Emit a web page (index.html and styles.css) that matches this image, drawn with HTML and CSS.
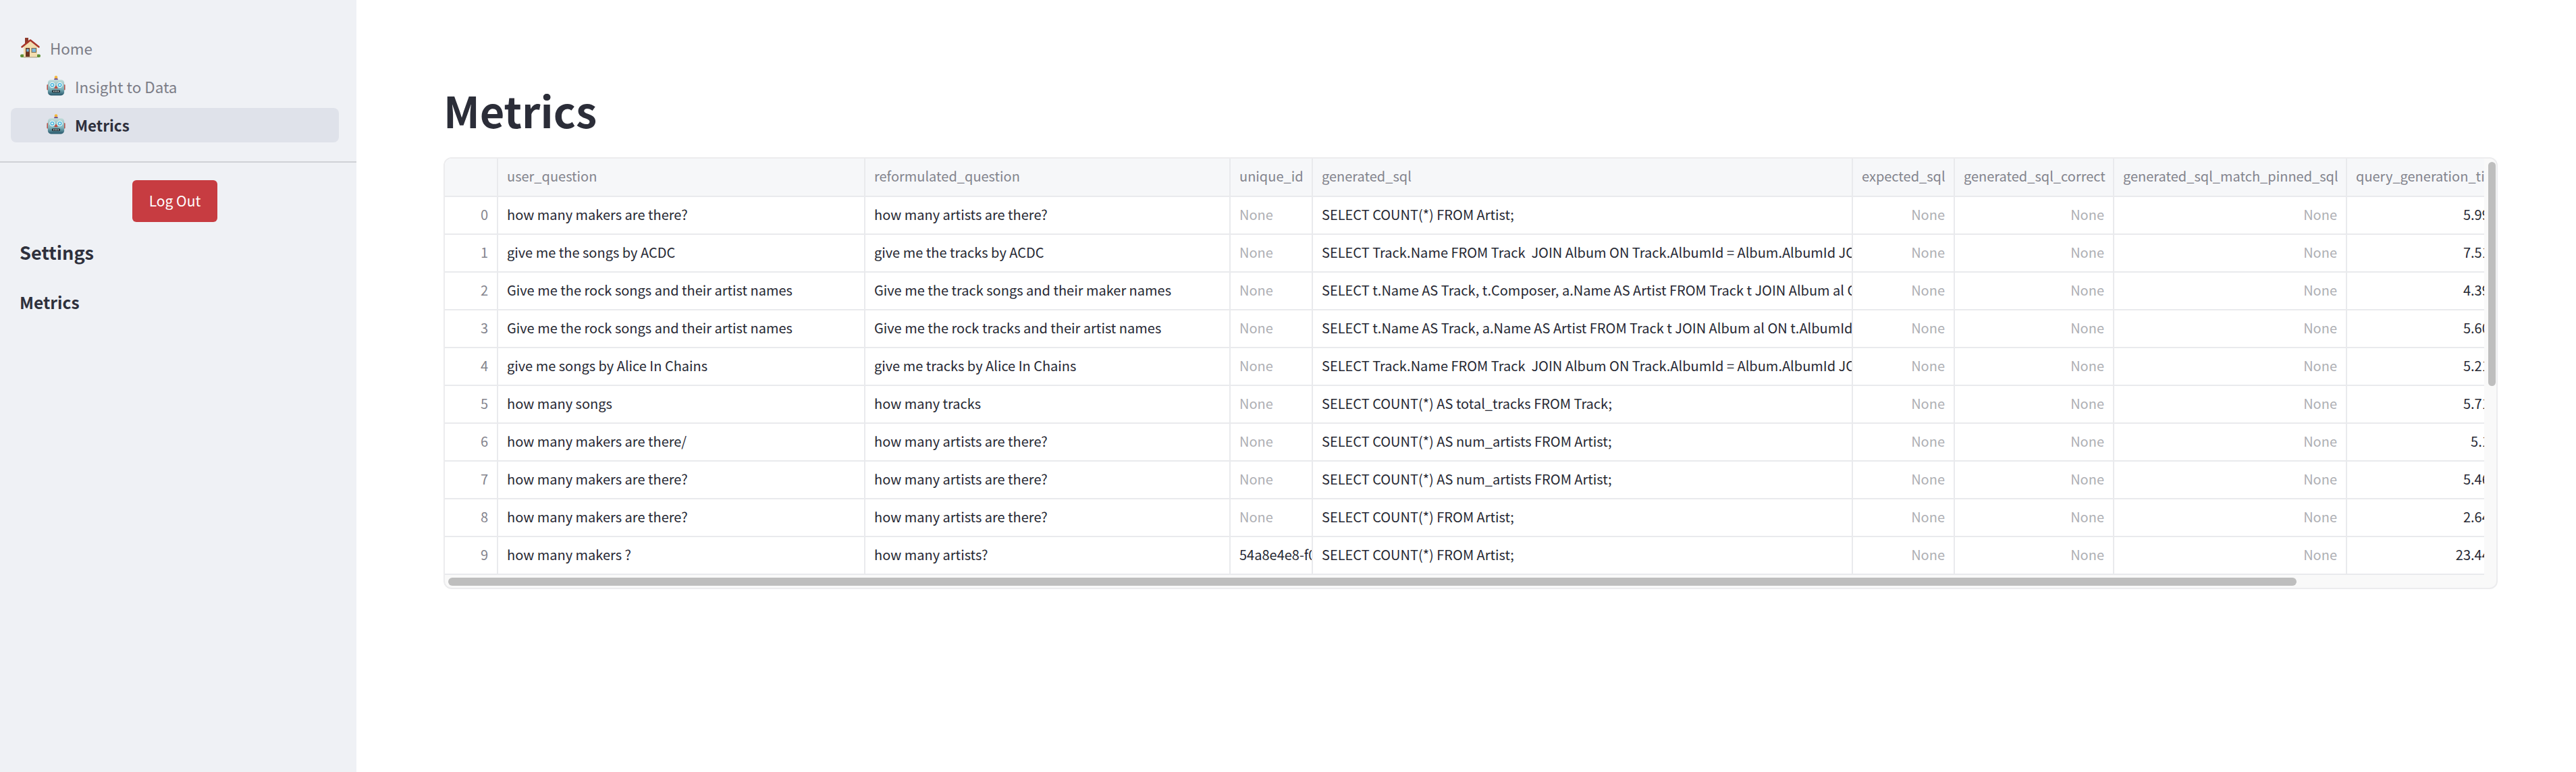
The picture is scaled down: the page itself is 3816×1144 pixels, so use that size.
FILE: index.html
```html
<!DOCTYPE html>
<html lang="en">
<head>
<meta charset="utf-8">
<title>Metrics</title>
<link rel="stylesheet" href="styles.css">
</head>
<body>
<div class="app">
  <aside class="sidebar">
    <nav class="nav">
      <a class="nav-item nav-home">
        <svg class="emoji-house" viewBox="0 0 30 30"><rect x="0" y="24.500" width="6" height="4.500" rx="2" fill="#5f8f37"/><rect x="24" y="24.500" width="6" height="4.500" rx="2" fill="#5f8f37"/><rect x="7" y="0" width="5" height="8" fill="#8e3a2c"/><path d="M5 13 15 5l10 8v15H5z" fill="#f2dcae"/><path d="M2.500 13.500 15 3.500l12.500 10" fill="none" stroke="#a8362a" stroke-width="2.600" stroke-linecap="round" stroke-linejoin="round"/><rect x="8" y="15" width="6" height="13" fill="#6b3320"/><rect x="9.300" y="16.500" width="3.400" height="4" fill="#6fb2d8"/><rect x="16.500" y="15" width="7.500" height="7" fill="#7d6a50"/><rect x="17.500" y="16" width="5.500" height="5" fill="#79b6dc"/><rect x="5" y="28" width="20" height="1.500" fill="#b9ad94"/></svg>
        <span>Home</span>
      </a>
      <a class="nav-item nav-sub">
        <svg class="emoji-robot" viewBox="0 0 30 32"><defs><linearGradient id="rb1" x1="0" y1="0" x2="0" y2="1"><stop offset="0" stop-color="#c2dcda"/><stop offset=".6" stop-color="#7fb3bb"/><stop offset="1" stop-color="#26566a"/></linearGradient></defs><circle cx="15" cy="2.800" r="2.500" fill="#f2b63c"/><rect x="12" y="4.500" width="6" height="2.500" rx="1" fill="#6a4a8c"/><rect x="0.500" y="14" width="3" height="9" rx="1" fill="#b8453a"/><rect x="26.500" y="14" width="3" height="9" rx="1" fill="#b8453a"/><rect x="2" y="6.500" width="26" height="25" rx="5" fill="url(#rb1)"/><circle cx="9" cy="15" r="4.500" fill="#e8f6f8"/><circle cx="21" cy="15" r="4.500" fill="#e8f6f8"/><circle cx="9" cy="15" r="3.200" fill="#46b4dc"/><circle cx="21" cy="15" r="3.200" fill="#46b4dc"/><circle cx="9" cy="15" r="1.600" fill="#e8f6f8"/><circle cx="21" cy="15" r="1.600" fill="#e8f6f8"/><path d="M15 15.500l3 5h-6z" fill="#c4463c"/><rect x="8.500" y="23" width="13" height="4" rx="1.500" fill="#1f2c33"/><path d="M10.500 24h1.500v2h-1.500zM13 24h1.500v2H13zM15.500 24H17v2h-1.500zM18 24h1.500v2H18z" fill="#c9d3d3"/></svg>
        <span>Insight to Data</span>
      </a>
      <a class="nav-item nav-sub nav-active">
        <svg class="emoji-robot" viewBox="0 0 30 32"><defs><linearGradient id="rb2" x1="0" y1="0" x2="0" y2="1"><stop offset="0" stop-color="#c2dcda"/><stop offset=".6" stop-color="#7fb3bb"/><stop offset="1" stop-color="#26566a"/></linearGradient></defs><circle cx="15" cy="2.800" r="2.500" fill="#f2b63c"/><rect x="12" y="4.500" width="6" height="2.500" rx="1" fill="#6a4a8c"/><rect x="0.500" y="14" width="3" height="9" rx="1" fill="#b8453a"/><rect x="26.500" y="14" width="3" height="9" rx="1" fill="#b8453a"/><rect x="2" y="6.500" width="26" height="25" rx="5" fill="url(#rb2)"/><circle cx="9" cy="15" r="4.500" fill="#e8f6f8"/><circle cx="21" cy="15" r="4.500" fill="#e8f6f8"/><circle cx="9" cy="15" r="3.200" fill="#46b4dc"/><circle cx="21" cy="15" r="3.200" fill="#46b4dc"/><circle cx="9" cy="15" r="1.600" fill="#e8f6f8"/><circle cx="21" cy="15" r="1.600" fill="#e8f6f8"/><path d="M15 15.500l3 5h-6z" fill="#c4463c"/><rect x="8.500" y="23" width="13" height="4" rx="1.500" fill="#1f2c33"/><path d="M10.500 24h1.500v2h-1.500zM13 24h1.500v2H13zM15.500 24H17v2h-1.500zM18 24h1.500v2H18z" fill="#c9d3d3"/></svg>
        <span>Metrics</span>
      </a>
    </nav>
    <div class="side-content">
      <div class="btn-row"><button class="logout">Log Out</button></div>
      <h2 class="side-title">Settings</h2>
      <h3 class="side-sub">Metrics</h3>
    </div>
  </aside>
  <main class="main">
    <h1 class="page-title">Metrics</h1>
    <div class="frame">
      <div class="viewport">
        <table class="grid">
          <colgroup><col class="c0"><col class="c1"><col class="c2"><col class="c3"><col class="c4"><col class="c5"><col class="c6"><col class="c7"><col class="c8"></colgroup>
          <thead>
            <tr><th></th><th>user_question</th><th>reformulated_question</th><th>unique_id</th><th>generated_sql</th><th>expected_sql</th><th>generated_sql_correct</th><th>generated_sql_match_pinned_sql</th><th>query_generation_time</th></tr>
          </thead>
          <tbody>
            <tr><td class="idx">0</td><td>how many makers are there?</td><td>how many artists are there?</td><td class="none">None</td><td>SELECT COUNT(*) FROM Artist;</td><td class="none right">None</td><td class="none right">None</td><td class="none right">None</td><td class="right">5.9912</td></tr>
            <tr><td class="idx">1</td><td>give me the songs by ACDC</td><td>give me the tracks by ACDC</td><td class="none">None</td><td>SELECT Track.Name FROM Track  JOIN Album ON Track.AlbumId = Album.AlbumId JOIN Artist ON Album.ArtistId = Artist.ArtistId</td><td class="none right">None</td><td class="none right">None</td><td class="none right">None</td><td class="right">7.5123</td></tr>
            <tr><td class="idx">2</td><td>Give me the rock songs and their artist names</td><td>Give me the track songs and their maker names</td><td class="none">None</td><td>SELECT t.Name AS Track, t.Composer, a.Name AS Artist FROM Track t JOIN Album al ON t.AlbumId = al.AlbumId</td><td class="none right">None</td><td class="none right">None</td><td class="none right">None</td><td class="right">4.3912</td></tr>
            <tr><td class="idx">3</td><td>Give me the rock songs and their artist names</td><td>Give me the rock tracks and their artist names</td><td class="none">None</td><td>SELECT t.Name AS Track, a.Name AS Artist FROM Track t JOIN Album al ON t.AlbumId = al.AlbumId</td><td class="none right">None</td><td class="none right">None</td><td class="none right">None</td><td class="right">5.6012</td></tr>
            <tr><td class="idx">4</td><td>give me songs by Alice In Chains</td><td>give me tracks by Alice In Chains</td><td class="none">None</td><td>SELECT Track.Name FROM Track  JOIN Album ON Track.AlbumId = Album.AlbumId JOIN Artist ON Album.ArtistId = Artist.ArtistId</td><td class="none right">None</td><td class="none right">None</td><td class="none right">None</td><td class="right">5.2123</td></tr>
            <tr><td class="idx">5</td><td>how many songs</td><td>how many tracks</td><td class="none">None</td><td>SELECT COUNT(*) AS total_tracks FROM Track;</td><td class="none right">None</td><td class="none right">None</td><td class="none right">None</td><td class="right">5.7123</td></tr>
            <tr><td class="idx">6</td><td>how many makers are there/</td><td>how many artists are there?</td><td class="none">None</td><td>SELECT COUNT(*) AS num_artists FROM Artist;</td><td class="none right">None</td><td class="none right">None</td><td class="none right">None</td><td class="right">5.123</td></tr>
            <tr><td class="idx">7</td><td>how many makers are there?</td><td>how many artists are there?</td><td class="none">None</td><td>SELECT COUNT(*) AS num_artists FROM Artist;</td><td class="none right">None</td><td class="none right">None</td><td class="none right">None</td><td class="right">5.4612</td></tr>
            <tr><td class="idx">8</td><td>how many makers are there?</td><td>how many artists are there?</td><td class="none">None</td><td>SELECT COUNT(*) FROM Artist;</td><td class="none right">None</td><td class="none right">None</td><td class="none right">None</td><td class="right">2.6412</td></tr>
            <tr><td class="idx">9</td><td>how many makers ?</td><td>how many artists?</td><td>54a8e4e8-f0c1-4b7e-9a31-6d2f</td><td>SELECT COUNT(*) FROM Artist;</td><td class="none right">None</td><td class="none right">None</td><td class="none right">None</td><td class="right">23.4412</td></tr>
          </tbody>
        </table>
      </div>
      <div class="thumb-h"></div>
      <div class="thumb-v"></div>
    </div>
  </main>
</div>
</body>
</html>
```

FILE: styles.css
```css
* { box-sizing: border-box; }
html, body { margin: 0; padding: 0; height: 100%; }
body {
  font-family: "Noto Sans CJK SC", "Noto Sans", sans-serif;
  color: #2e303c;
  background: #fff;
}
.app { display: flex; min-height: 1144px; }

.sidebar { width: 528px; flex: none; background: #eff1f5; }
.nav { padding: 46px 26px 28px 16px; border-bottom: 2px solid #cfd1d6; height: 241px; }
.nav-item {
  display: flex; align-items: center; gap: 14px;
  height: 51px; margin-bottom: 6px;
  border-radius: 8px;
  font-size: 22.4px; line-height: 30px;
  color: #7c7d87;
}
.nav-item span { padding-bottom: 2px; }
.nav-home { padding-left: 14px; }
.nav-sub { padding-left: 53px; }
.nav-active { background: #dfe2ea; color: #2e303c; font-weight: 600; margin-bottom: 0; }
.emoji-house { width: 30px; height: 30px; flex: none; margin-bottom: 2px; }
.emoji-robot { width: 28px; height: 30px; flex: none; margin-bottom: 3px; }

.side-content { padding: 26px 0 0 0; }
.btn-row { display: flex; justify-content: center; padding: 0 26px 0 16px; }
.logout {
  width: 126px; height: 62px;
  border: 0; border-radius: 6px;
  background: #c73c41; color: #fff;
  font: 400 21px/30px "Noto Sans CJK SC", "Noto Sans", sans-serif;
  padding: 0 0 2px;
}
.side-title { margin: 24px 0 0 29px; font-size: 27.2px; line-height: 40px; font-weight: 600; color: #2e303c; }
.side-sub { margin: 34px 0 0 29px; font-size: 24.6px; line-height: 40px; font-weight: 600; color: #2e303c; }

.main { flex: 1; min-width: 0; padding: 0 116px 0 129px; }
.page-title {
  margin: 0; padding-top: 118px; height: 233px;
  font-size: 63px; line-height: 90px; font-weight: 700; color: #2b2d38;
}

.frame {
  position: relative;
  height: 640px; width: 100%;
  border: 2px solid #ececee;
  border-radius: 12px;
  background: #f9f9f9;
  overflow: hidden;
}
.viewport { width: 3021px; height: 617px; overflow: hidden; background: #fff; }
.grid { table-layout: fixed; border-collapse: separate; border-spacing: 0; width: 3066px; font-size: 20px; }
.c0 { width: 79px; }
.c1 { width: 544px; }
.c2 { width: 541px; }
.c3 { width: 122px; }
.c4 { width: 800px; }
.c5 { width: 151px; }
.c6 { width: 236px; }
.c7 { width: 345px; }
.c8 { width: 248px; }
.grid th, .grid td {
  padding: 0 0 3px 13px;
  overflow: hidden;
  white-space: pre;
  text-align: left;
  font-weight: 400;
  border-right: 2px solid #e9eaed;
  border-bottom: 2px solid #e9eaed;
  line-height: 30px;
}
.grid th { height: 57px; background: #f6f7f9; color: #83848d; }
.grid td { height: 56px; color: #262833; }
.grid td.idx { text-align: right; color: #83848d; padding: 0 13px 3px 0; }
.grid td.none { color: #aeafb4; }
.grid td.right { text-align: right; padding: 0 13px 3px 0; }
.grid td.right:not(.none) { color: #262833; }
.thumb-h { position: absolute; left: 5px; top: 621px; width: 2738px; height: 12px; border-radius: 6px; background: #bebebe; }
.thumb-v { position: absolute; left: 3027px; top: 5px; width: 11px; height: 332px; border-radius: 6px; background: #bebebe; }
```
